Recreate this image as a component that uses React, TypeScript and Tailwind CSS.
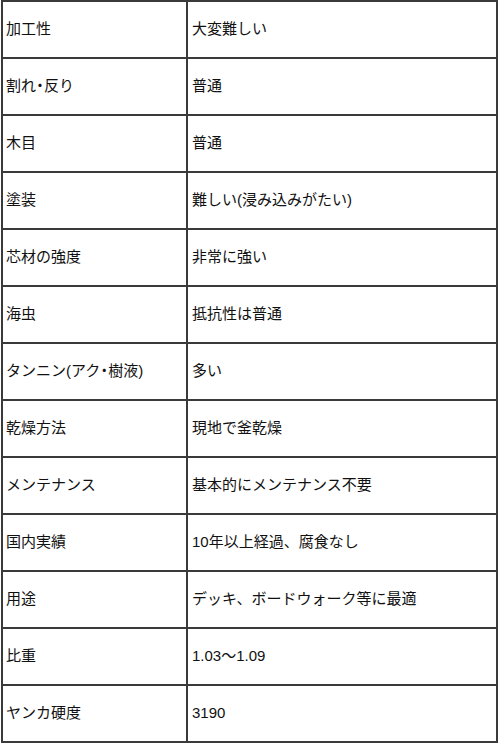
import React from "react";

const rows: [string, string][] = [
  ["加工性", "大変難しい"],
  ["割れ・反り", "普通"],
  ["木目", "普通"],
  ["塗装", "難しい(浸み込みがたい)"],
  ["芯材の強度", "非常に強い"],
  ["海虫", "抵抗性は普通"],
  ["タンニン(アク・樹液)", "多い"],
  ["乾燥方法", "現地で釜乾燥"],
  ["メンテナンス", "基本的にメンテナンス不要"],
  ["国内実績", "10年以上経過、腐食なし"],
  ["用途", "デッキ、ボードウォーク等に最適"],
  ["比重", "1.03～1.09"],
  ["ヤンカ硬度", "3190"],
];

function Text({ s }: { s: string }) {
  const parts = s.split("・");
  return (
    <span className="whitespace-nowrap">
      {parts.map((p, i) => (
        <React.Fragment key={i}>
          {i > 0 && <span className="-mx-[3.5px]">・</span>}
          {p}
        </React.Fragment>
      ))}
    </span>
  );
}

export default function App() {
  return (
    <div className="w-[500px] h-[743px] bg-white">
      <div
        className="ml-[1px] w-[497px] h-[743px] border-2 border-[#3a3a3a] flex flex-col text-[15px] text-[#111]"
        style={{ fontFamily: '"Liberation Sans", Arial, "Noto Sans CJK JP", sans-serif' }}
      >
        {rows.map(([k, v], i) => (
          <div
            key={i}
            className={
              i < rows.length - 1
                ? "flex h-[57px] shrink-0 border-b-2 border-[#3a3a3a]"
                : "flex flex-1"
            }
          >
            <div className="w-[185px] shrink-0 border-r-2 border-[#3a3a3a] flex items-center pl-[3px]">
              <Text s={k} />
            </div>
            <div className="flex-1 flex items-center pl-[4px]">
              <Text s={v} />
            </div>
          </div>
        ))}
      </div>
    </div>
  );
}
